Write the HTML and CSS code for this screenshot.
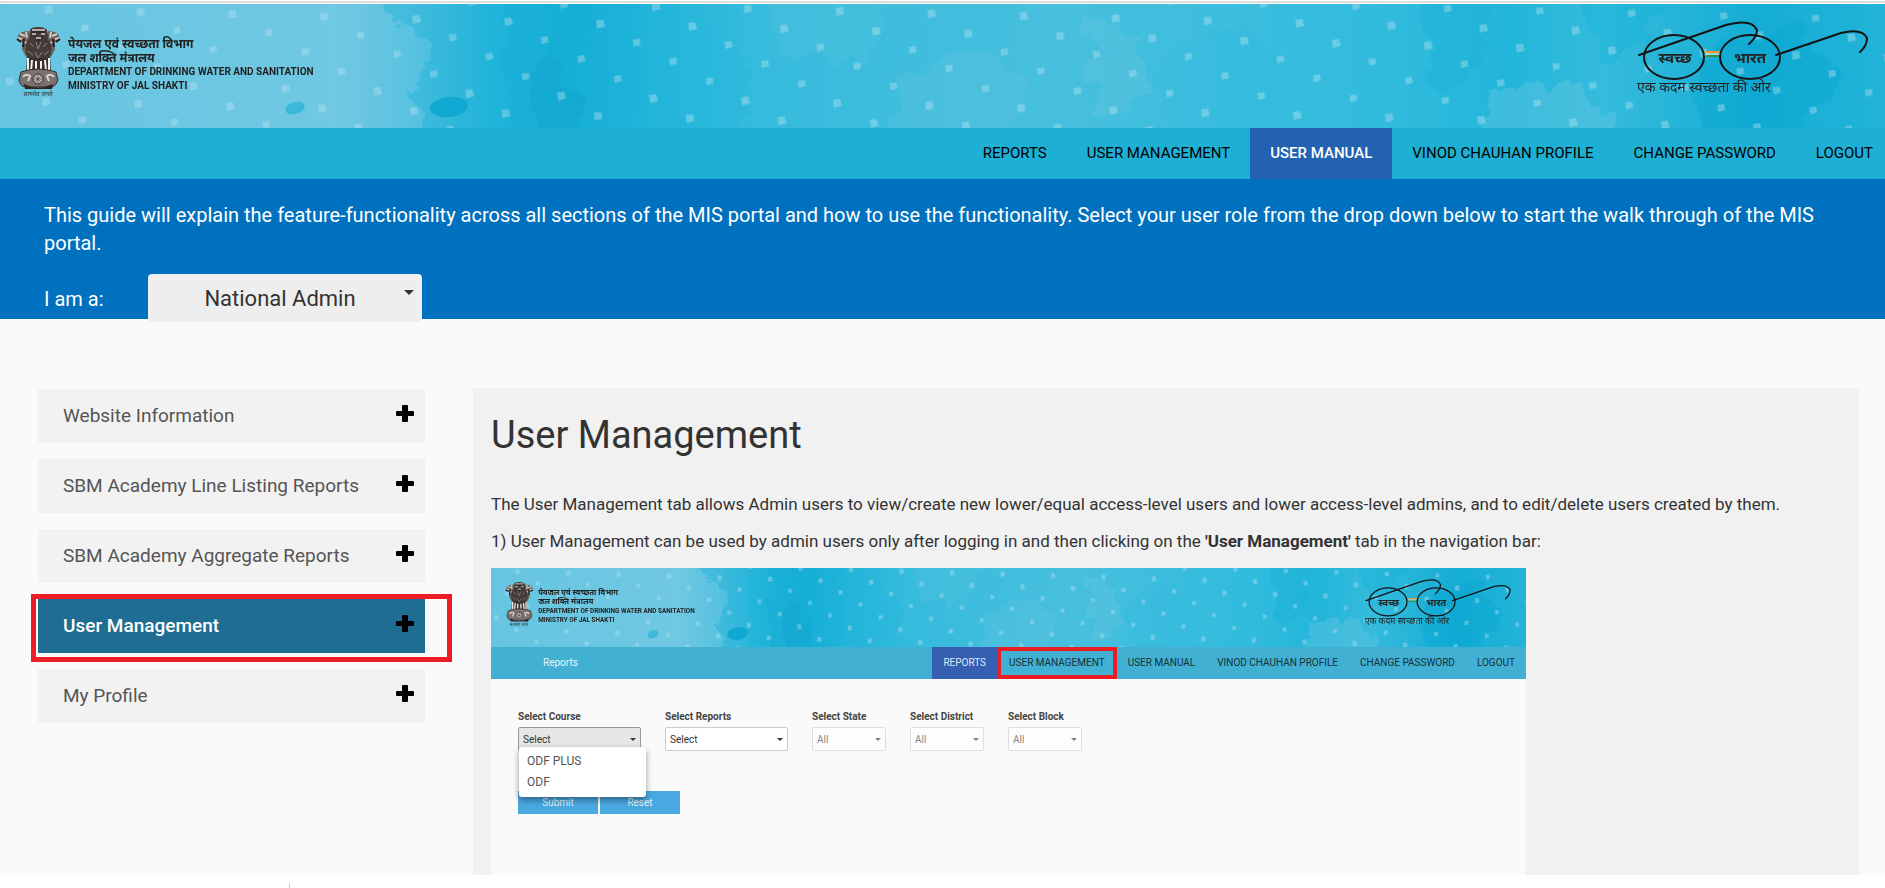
FILE: index.html
```html
<!DOCTYPE html>
<html lang="en">
<head>
<meta charset="utf-8">
<title>User Manual</title>
<link rel="stylesheet" href="styles.css">
</head>
<body>
<svg class="sprite" aria-hidden="true">
  <defs>
    <linearGradient id="wash" x1="0" x2="1" y1="0" y2="0">
      <stop offset="0" stop-color="#66c5e1"/>
      <stop offset=".18" stop-color="#70c8e2"/>
      <stop offset=".22" stop-color="#58c2e0"/>
      <stop offset=".26" stop-color="#25b6db"/>
      <stop offset=".31" stop-color="#17b0d7"/>
      <stop offset=".4" stop-color="#35bbdd"/>
      <stop offset=".56" stop-color="#48bfde"/>
      <stop offset=".74" stop-color="#30bbdd"/>
      <stop offset=".8" stop-color="#22b5da"/>
      <stop offset=".85" stop-color="#35bbdc"/>
      <stop offset=".93" stop-color="#15add4"/>
      <stop offset="1" stop-color="#22b3d8"/>
    </linearGradient>
    <pattern id="confetti" width="92" height="92" patternUnits="userSpaceOnUse" patternTransform="translate(80 17) rotate(1.5)">
      <g fill="#b4e3f0" fill-opacity=".42">
        <path d="M1 4l7-1 1 6-7 2z"/>
        <path d="M38 22l7-1 1 6-7 2z"/>
        <path d="M75 41l7-1 1 6-7 2z"/>
        <path d="M19 59l7-1 2 7-8 2z"/>
        <path d="M56 78l7-1 2 7-8 2z"/>
      </g>
    </pattern>
    <filter id="rough" x="-10%" y="-10%" width="120%" height="120%">
      <feTurbulence type="fractalNoise" baseFrequency=".035" numOctaves="4" seed="7"/>
      <feDisplacementMap in="SourceGraphic" scale="40" xChannelSelector="R" yChannelSelector="G"/>
    </filter>
  </defs>
  <symbol id="header-art" viewBox="0 0 1885 124" preserveAspectRatio="none">
    <rect width="1885" height="124" fill="url(#wash)"/>
    <g filter="url(#rough)">
      <path d="M370-20L385 15 425 35 432 70 410 85 425 105 405 150H640V-20z" fill="#12b0d8" opacity=".38"/>
      <path d="M500-20H570L590 30 560 150H510z" fill="#0aa6d0" opacity=".25"/>
      <path d="M540 30L565 70 595 150H535z" fill="#0a9fcb" opacity=".3"/>
      <path d="M640 40L700 20 750 60 740 150H660z" fill="#22b6dc" opacity=".25"/>
      <path d="M760-20H900L860 60 780 50z" fill="#5cc4df" opacity=".3"/>
      <path d="M900 70L980 40 1030 80 1000 150H890z" fill="#62c5df" opacity=".3"/>
      <path d="M1080 20L1140 30 1150 90 1100 110z" fill="#62c5df" opacity=".4"/>
      <path d="M1150 60L1230 20 1290 60 1260 150H1180z" fill="#2bb9dd" opacity=".28"/>
      <path d="M1410-20H1500L1480 60 1440 90z" fill="#12aed7" opacity=".35"/>
      <path d="M1490 85L1590 80 1620 150H1480z" fill="#62c5df" opacity=".45"/>
      <path d="M1580-20H1680L1640 50 1600 60z" fill="#12aed7" opacity=".25"/>
      <path d="M1700 50L1800 20 1850 80 1760 150H1690z" fill="#05a2cf" opacity=".3"/>
    </g>
    <ellipse cx="295" cy="104" rx="10" ry="6" transform="rotate(-15 295 104)" fill="#2db5da" opacity=".8"/>
    <ellipse cx="449" cy="103" rx="19" ry="10" transform="rotate(-6 449 103)" fill="#0ba6d0" opacity=".85"/>
    <rect width="1885" height="124" fill="url(#confetti)"/>
  </symbol>
  <symbol id="plus" viewBox="0 0 18 18">
    <path d="M6 1Q6 0 7 0H11Q12 0 12 1V6H17Q18 6 18 7V10Q18 11 17 11H12V16Q12 17 11 17H7Q6 17 6 16V11H1Q0 11 0 10V7Q0 6 1 6H6z"/>
  </symbol>
</svg>

<header class="masthead">
  <svg class="masthead-art" aria-hidden="true"><use href="#header-art"/></svg>
  <svg class="department" viewBox="0 0 304 72" role="img" aria-label="Department of Drinking Water and Sanitation">
    <g id="department-logo">
      <!-- side lions -->
      <path d="M2 12Q1 7 6 5L13 4 15 12 15 28 10 30 6 22 7 16z" fill="#6a605c"/>
      <path d="M43 12Q44 7 39 5L32 4 30 12 30 28 35 30 39 22 38 16z" fill="#6a605c"/>
      <path d="M2 11L6 12M4 7L9 9M10 5L11 11M7 15L12 16M43 11L39 12M41 7L36 9M35 5L34 11M38 15L33 16" stroke="#cfc8c4" stroke-width="2"/>
      <path d="M1 12L5 15M44 12L40 15M8 12L7 20M37 12L38 20" stroke="#241d1c" stroke-width="2" fill="none"/>
      <!-- centre lion -->
      <path d="M14 3Q15 0 22 0T31 3L32 12Q37 17 35 26L32 35H13L10 26Q8 17 13 12z" fill="#453c39"/>
      <path d="M16 3H29M16 7H20M25 7H29M20 11H25" stroke="#b3aaa5" stroke-width="2"/>
      <path d="M14 16L18 20M31 16L27 20M20 15L22 22 25 15M12 24L17 28M33 24L28 28M19 25L22 31 26 25" stroke="#8f8580" stroke-width="1" fill="none"/>
      <path d="M16 5H29M18 9L20 10M27 9L25 10M21 13H24" stroke="#1d1716" stroke-width="1"/>
      <!-- legs -->
      <path d="M11 29L14 31H31L34 29 35 46H10z" fill="#3a3230"/>
      <path d="M12 31L12 43M16 33L15 44M20 34L20 42M25 34L25 42M29 33L30 44M33 31L33 43" stroke="#f1eeec" stroke-width="2"/>
      <!-- abacus -->
      <path d="M5 45Q22 39 40 45L42 53Q40 59 36 60H9Q4 59 3 53z" fill="#7b716d" stroke="#332b2a"/>
      <path d="M8 57Q22 64 37 57L36 62H9z" fill="#2d2625"/>
      <circle cx="22" cy="52" r="5" fill="#c2bab6" stroke="#332b2a"/>
      <path d="M22 48V56M18 52H26M19 49L25 55M25 49L19 55" stroke="#3a3130" stroke-width=".6"/>
      <path d="M7 50Q10 46 14 49L12 54M38 50Q35 46 31 49L33 54" fill="none" stroke="#ddd6d2" stroke-width="2"/>
      <text class="logo-motto" x="22" y="69" text-anchor="middle">सत्यमेव जयते</text>
      <text class="logo-hindi" x="52" y="21">पेयजल एवं स्वच्छता विभाग</text>
      <text class="logo-hindi" x="52" y="35">जल शक्ति मंत्रालय</text>
      <text class="logo-english" x="52" y="48">DEPARTMENT OF DRINKING WATER AND SANITATION</text>
      <text class="logo-english" x="52" y="62">MINISTRY OF JAL SHAKTI</text>
    </g>
  </svg>
  <svg class="mission" viewBox="0 0 234 74" role="img" aria-label="Swachh Bharat">
    <g id="mission-logo">
      <path d="M70 31H84" stroke="#f7941d" stroke-width="2"/>
      <path d="M70 33H84" stroke="#fff" stroke-width="2" opacity=".5"/>
      <path d="M70 35H84" stroke="#3f8f3a" stroke-width="2"/>
      <g fill="none" stroke="#141414" stroke-width="2">
        <ellipse cx="38" cy="36" rx="30" ry="22"/>
        <ellipse cx="114" cy="36" rx="30" ry="22"/>
        <path d="M3 34L90 4Q116-3 121 9 121 16 113 23M140 34L205 12Q226 7 231 17 231 25 224 31" stroke-linecap="round"/>
      </g>
      <text class="logo-lens" x="39" y="42" text-anchor="middle">स्वच्छ</text>
      <text class="logo-lens" x="114" y="42" text-anchor="middle">भारत</text>
      <text class="logo-tagline" x="1" y="71">एक कदम स्वच्छता की ओर</text>
    </g>
  </svg>
</header>

<nav class="nav">
  <a href="#">REPORTS</a>
  <a href="#">USER MANAGEMENT</a>
  <a href="#" class="active">USER MANUAL</a>
  <a href="#">VINOD CHAUHAN PROFILE</a>
  <a href="#">CHANGE PASSWORD</a>
  <a href="#">LOGOUT</a>
</nav>

<section class="intro">
  <p>This guide will explain the feature-functionality across all sections of the MIS portal and how to use the functionality. Select your user role from the drop down below to start the walk through of the MIS portal.</p>
  <div class="role">
    <label for="role">I am a:</label>
    <span class="role-box caret">
      <select id="role"><option>National Admin</option></select>
    </span>
  </div>
</section>

<div class="content">
  <aside class="sidebar">
    <button type="button">Website Information<svg class="plus"><use href="#plus"/></svg></button>
    <button type="button">SBM Academy Line Listing Reports<svg class="plus"><use href="#plus"/></svg></button>
    <button type="button">SBM Academy Aggregate Reports<svg class="plus"><use href="#plus"/></svg></button>
    <button type="button" class="current">User Management<svg class="plus"><use href="#plus"/></svg></button>
    <button type="button">My Profile<svg class="plus"><use href="#plus"/></svg></button>
  </aside>

  <main class="guide">
    <h1>User Management</h1>
    <p>The User Management tab allows Admin users to view/create new lower/equal access-level users and lower access-level admins, and to edit/delete users created by them.</p>
    <p>1) User Management can be used by admin users only after logging in and then clicking on the <strong>'User Management'</strong> tab in the navigation bar:</p>

    <div class="demo">
      <div class="demo-head">
        <svg class="masthead-art" aria-hidden="true"><use href="#header-art"/></svg>
        <svg class="department" viewBox="0 0 304 72" aria-hidden="true"><use href="#department-logo"/></svg>
        <svg class="mission" viewBox="0 0 234 74" aria-hidden="true"><use href="#mission-logo"/></svg>
      </div>
      <div class="demo-nav">
        <span class="demo-title">Reports</span>
        <a href="#" class="active">REPORTS</a>
        <a href="#" class="marked">USER MANAGEMENT</a>
        <a href="#">USER MANUAL</a>
        <a href="#">VINOD CHAUHAN PROFILE</a>
        <a href="#">CHANGE PASSWORD</a>
        <a href="#">LOGOUT</a>
      </div>
      <div class="demo-body">
        <div class="filters">
          <div class="field wide open">
            <label for="course">Select Course</label>
            <span class="caret"><select id="course"><option>Select</option></select></span>
            <ul class="menu"><li>ODF PLUS</li><li>ODF</li></ul>
          </div>
          <div class="field wide">
            <label for="reports">Select Reports</label>
            <span class="caret"><select id="reports"><option>Select</option></select></span>
          </div>
          <div class="field off">
            <label for="state">Select State</label>
            <span class="caret"><select id="state"><option>All</option></select></span>
          </div>
          <div class="field off">
            <label for="district">Select District</label>
            <span class="caret"><select id="district"><option>All</option></select></span>
          </div>
          <div class="field off">
            <label for="block">Select Block</label>
            <span class="caret"><select id="block"><option>All</option></select></span>
          </div>
        </div>
        <div class="actions">
          <button type="button">Submit</button>
          <button type="button">Reset</button>
        </div>
      </div>
    </div>
  </main>
</div>
<footer class="foot"></footer>
</body>
</html>
```

FILE: styles.css
```css
* { box-sizing: border-box; }

body {
  margin: 0;
  min-height: 100vh;
  display: flex;
  flex-direction: column;
  background: #fff;
  color: #333;
  font-family: Roboto, "Noto Sans", sans-serif;
}

a { text-decoration: none; }
button, select { font-family: inherit; }
.sprite { position: absolute; width: 0; height: 0; }

.logo-hindi, .logo-lens { font: 700 12px "Noto Sans Devanagari", "Noto Sans", sans-serif; fill: #222; }
.logo-lens { font-size: 15px; }
.logo-english { font: 700 10px Roboto, sans-serif; fill: #222; }
.logo-motto { font: 6px "Noto Sans Devanagari", "Noto Sans", sans-serif; fill: #333; }
.logo-tagline { font: 14px "Noto Sans Devanagari", "Noto Sans", sans-serif; fill: #222; }

.masthead {
  position: relative;
  flex: none;
  display: flex;
  justify-content: space-between;
  margin-top: 1px;
  padding: 18px 15px 29px 16px;
  border-top: 2px solid #ddd;
  height: 127px;
}
.masthead-art {
  position: absolute;
  left: 0;
  bottom: 0;
  width: 100%;
  height: calc(100% - 1px);
}
.department, .mission { position: relative; }
.department { width: 304px; height: 72px; margin-top: 6px; }
.mission { width: 234px; height: 74px; }

.nav {
  flex: none;
  display: flex;
  justify-content: flex-end;
  background: #1eb0d4;
  font-size: 15px;
  line-height: 18px;
}
.nav a { padding: 16px 20px 17px; color: #000; }
.nav a:last-child { padding-right: 12px; }
.nav .active { background: #2262b1; color: #fff; font-weight: 500; }

.intro {
  flex: none;
  height: 140px;
  padding: 22px 44px 0;
  background: #0071be;
  color: #fff;
  font-size: 20px;
  line-height: 28px;
}
.intro p { margin: 0 0 17px; }
.role { display: flex; }
.role label { width: 104px; padding-top: 11px; }

.caret { position: relative; display: block; }
.caret::after {
  content: "";
  position: absolute;
  right: 8px;
  top: 16px;
  border: 5px solid transparent;
  border-top-color: #333;
  border-bottom: 0;
  pointer-events: none;
}
.caret select {
  appearance: none;
  display: block;
  width: 100%;
  margin: 0;
  color: #333;
}
.role-box { width: 274px; }
.role-box select {
  height: 48px;
  padding: 0 18px 0 8px;
  border: 0;
  border-radius: 4px;
  background: #eee;
  font-size: 22px;
  text-align: center;
  text-align-last: center;
}

.content {
  flex: 1;
  display: flex;
  gap: 48px;
  padding: 69px 26px 0 38px;
  background: #fafafa;
}
.sidebar {
  flex: none;
  width: 387px;
  display: flex;
  flex-direction: column;
  gap: 16px;
  padding-top: 1px;
}
.sidebar button {
  position: relative;
  display: flex;
  justify-content: space-between;
  height: 54px;
  padding: 16px 11px 16px 25px;
  border: 0;
  background: #f2f2f2;
  color: #555;
  font-size: 19px;
  line-height: 22px;
  text-align: left;
}
.sidebar .current { background: #1f6d92; color: #fff; font-weight: 500; }
.sidebar .current::before {
  content: "";
  position: absolute;
  inset: -5px -27px -9px -7px;
  border: 5px solid #ee1c24;
}
.plus { width: 18px; height: 18px; fill: #000; }

.guide {
  flex: 1;
  min-width: 0;
  padding: 24px 18px 0;
  background: #f1f1f1;
  font-size: 17px;
  line-height: 25px;
}
.guide h1 { margin: 0 0 34px; font-size: 38px; font-weight: 400; line-height: 46px; }
.guide p { margin: 0 0 12px; }
.guide strong { font-weight: 700; }

.demo {
  width: 77%;
  max-width: 1035px;
  height: 307px;
  margin-top: 14px;
  background: #fafafa;
  font-size: 10px;
  line-height: 12px;
}
.demo-head {
  position: relative;
  display: flex;
  justify-content: space-between;
  height: 79px;
  padding: 11px 14px 0;
}
.demo-head .masthead-art { height: 100%; }
.demo-head .department { width: 194px; height: 46px; margin-top: 3px; }
.demo-head .mission { width: 148px; height: 47px; }
.demo-nav { display: flex; height: 32px; background: #42b0d3; }
.demo-title { margin-right: auto; padding: 10px 0 0 52px; color: #e8f6fb; }
.demo-nav a { padding: 10px 11px; color: #14303a; }
.demo-nav .active { background: #355fb1; color: #dfe8f6; }
.demo-nav .marked { padding: 6px 8px; border: 4px solid #ec1c24; }

.demo-body { padding: 32px 27px 0; }
.filters { display: flex; gap: 24px; }
.field { position: relative; width: 74px; }
.wide { width: 123px; }
.field label { display: block; margin-bottom: 4px; font-weight: 700; color: #444; }
.field select {
  height: 24px;
  padding: 0 4px;
  border: 1px solid #ccc;
  border-radius: 2px;
  background: #fff;
  font-size: 10px;
}
.field .caret::after { right: 5px; top: 11px; border-width: 3px 3px 0; }
.off .caret { opacity: .6; }
.open select { border-color: #999; background: #e6e6e6; }
.menu {
  position: absolute;
  top: 36px;
  left: 1px;
  width: 127px;
  margin: 0;
  padding: 4px 8px;
  list-style: none;
  border-radius: 3px;
  background: #fff;
  box-shadow: 0 3px 6px rgba(0, 0, 0, .4);
  color: #555;
  font-size: 12px;
  line-height: 21px;
}
.actions { display: flex; gap: 2px; margin-top: 40px; }
.actions button {
  width: 80px;
  height: 23px;
  padding: 0;
  border: 0;
  background: #4aa8e0;
  color: #e6f3fb;
  font-size: 10px;
}

.foot { flex: none; display: flex; height: 13px; background: #fff; }
.foot::after {
  content: "";
  width: 1px;
  height: 5px;
  margin: 8px 0 0 289px;
  background: #ccc;
}
```
